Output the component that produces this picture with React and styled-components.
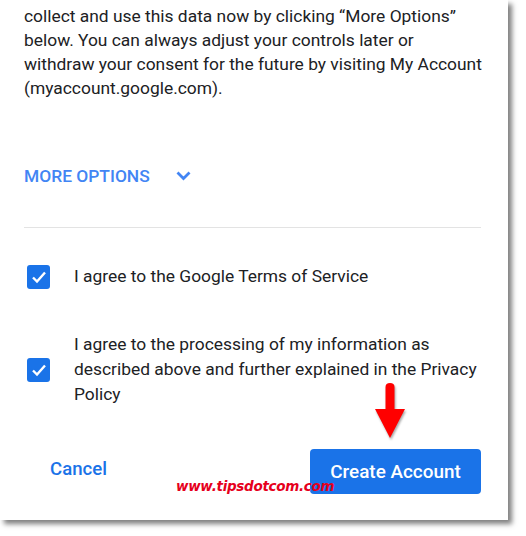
import React from "react";
import styled, { createGlobalStyle } from "styled-components";

const GlobalStyle = createGlobalStyle`
  html, body {
    margin: 0;
    padding: 0;
    background: #ffffff;
  }
  body {
    font-family: Roboto, "Liberation Sans", Arial, sans-serif;
    color: #202124;
  }
`;

const Page = styled.div`
  width: 526px;
  height: 536px;
  overflow: hidden;
  background: #ffffff;
`;

const Panel = styled.section`
  width: 508px;
  height: 520px;
  box-sizing: border-box;
  padding: 0 27px 0 24px;
  background: #ffffff;
  box-shadow: 4px 4px 5px rgba(0, 0, 0, 0.5);
  display: flex;
  flex-direction: column;
`;

const Paragraph = styled.p`
  margin: 4px 0 0;
  font-size: 17.4px;
  line-height: 24px;
  color: #202124;
  white-space: nowrap;
`;

const MoreOptions = styled.button`
  margin-top: 64px;
  align-self: flex-start;
  display: flex;
  align-items: center;
  gap: 26px;
  padding: 0;
  border: none;
  background: none;
  font-family: Roboto, "Liberation Sans", Arial, sans-serif;
  font-size: 17.4px;
  font-weight: 500;
  line-height: 24px;
  color: #4285f4;
  cursor: pointer;
`;

const Divider = styled.hr`
  margin: 39px 0 0;
  border: none;
  border-top: 1px solid #e3e3e3;
`;

const CheckRow = styled.label`
  display: flex;
  align-items: center;
  gap: 24px;
  margin-top: ${({ $top }) => $top}px;
  padding-left: 3px;
`;

const Box = styled.span`
  flex: none;
  width: 23px;
  height: 24px;
  border-radius: 3px;
  background: #1a73e8;
  display: flex;
  align-items: center;
  justify-content: center;
`;

const CheckText = styled.span`
  font-size: 17.4px;
  line-height: 25px;
  color: #202124;
`;

const Footer = styled.div`
  position: relative;
  margin-top: auto;
  margin-bottom: 26px;
  display: flex;
  align-items: center;
  justify-content: space-between;
  padding-left: 26px;
`;

const TextButton = styled.button`
  margin-bottom: 6px;
  padding: 0;
  border: none;
  background: none;
  font-family: Roboto, "Liberation Sans", Arial, sans-serif;
  font-size: 18.6px;
  font-weight: 500;
  color: #1a73e8;
  cursor: pointer;
`;

const PrimaryButton = styled.button`
  width: 171px;
  height: 45px;
  padding: 0;
  border: none;
  border-radius: 4px;
  background: #1a73e8;
  color: #ffffff;
  font-family: Roboto, "Liberation Sans", Arial, sans-serif;
  font-size: 18.9px;
  font-weight: 500;
  cursor: pointer;
`;

const Arrow = styled.svg`
  position: absolute;
  left: 349px;
  top: -68px;
  filter: drop-shadow(1px 2px 1px rgba(0, 0, 0, 0.35));
`;

const Watermark = styled.span`
  position: absolute;
  left: 152px;
  top: 29px;
  font-family: "DejaVu Sans", Verdana, sans-serif;
  font-size: 13.5px;
  font-weight: bold;
  font-style: italic;
  color: #e6001c;
  letter-spacing: -0.3px;
`;

function Check() {
  return (
    <svg width="16" height="14" viewBox="0 0 16 14">
      <path
        d="M2 7.5 L6 11.5 L14 2.5"
        fill="none"
        stroke="#ffffff"
        strokeWidth="2.4"
      />
    </svg>
  );
}

function Chevron() {
  return (
    <svg width="15" height="10" viewBox="0 0 15 10">
      <path
        d="M1.5 1.5 L7.5 7.5 L13.5 1.5"
        fill="none"
        stroke="#4285f4"
        strokeWidth="2.8"
      />
    </svg>
  );
}

export default function App() {
  return (
    <Page>
      <GlobalStyle />
      <Panel>
        <Paragraph>
          collect and use this data now by clicking “More Options”
          <br />
          below. You can always adjust your controls later or
          <br />
          withdraw your consent for the future by visiting My Account
          <br />
          (myaccount.google.com).
        </Paragraph>
        <MoreOptions>
          MORE OPTIONS
          <Chevron />
        </MoreOptions>
        <Divider />
        <CheckRow $top={36}>
          <Box>
            <Check />
          </Box>
          <CheckText>I agree to the Google Terms of Service</CheckText>
        </CheckRow>
        <CheckRow $top={43}>
          <Box>
            <Check />
          </Box>
          <CheckText>
            I agree to the processing of my information as described above
            and further explained in the Privacy Policy
          </CheckText>
        </CheckRow>
        <Footer>
          <TextButton>Cancel</TextButton>
          <PrimaryButton>Create Account</PrimaryButton>
          <Arrow width="34" height="60" viewBox="0 0 34 60">
            <path
              d="M12.5 6 Q12.5 2 17 2 Q21.5 2 21.5 6 L21.5 28 L32 28 L17 57 L2 28 L12.5 28 Z"
              fill="#ff0000"
            />
          </Arrow>
          <Watermark>www.tipsdotcom.com</Watermark>
        </Footer>
      </Panel>
    </Page>
  );
}
